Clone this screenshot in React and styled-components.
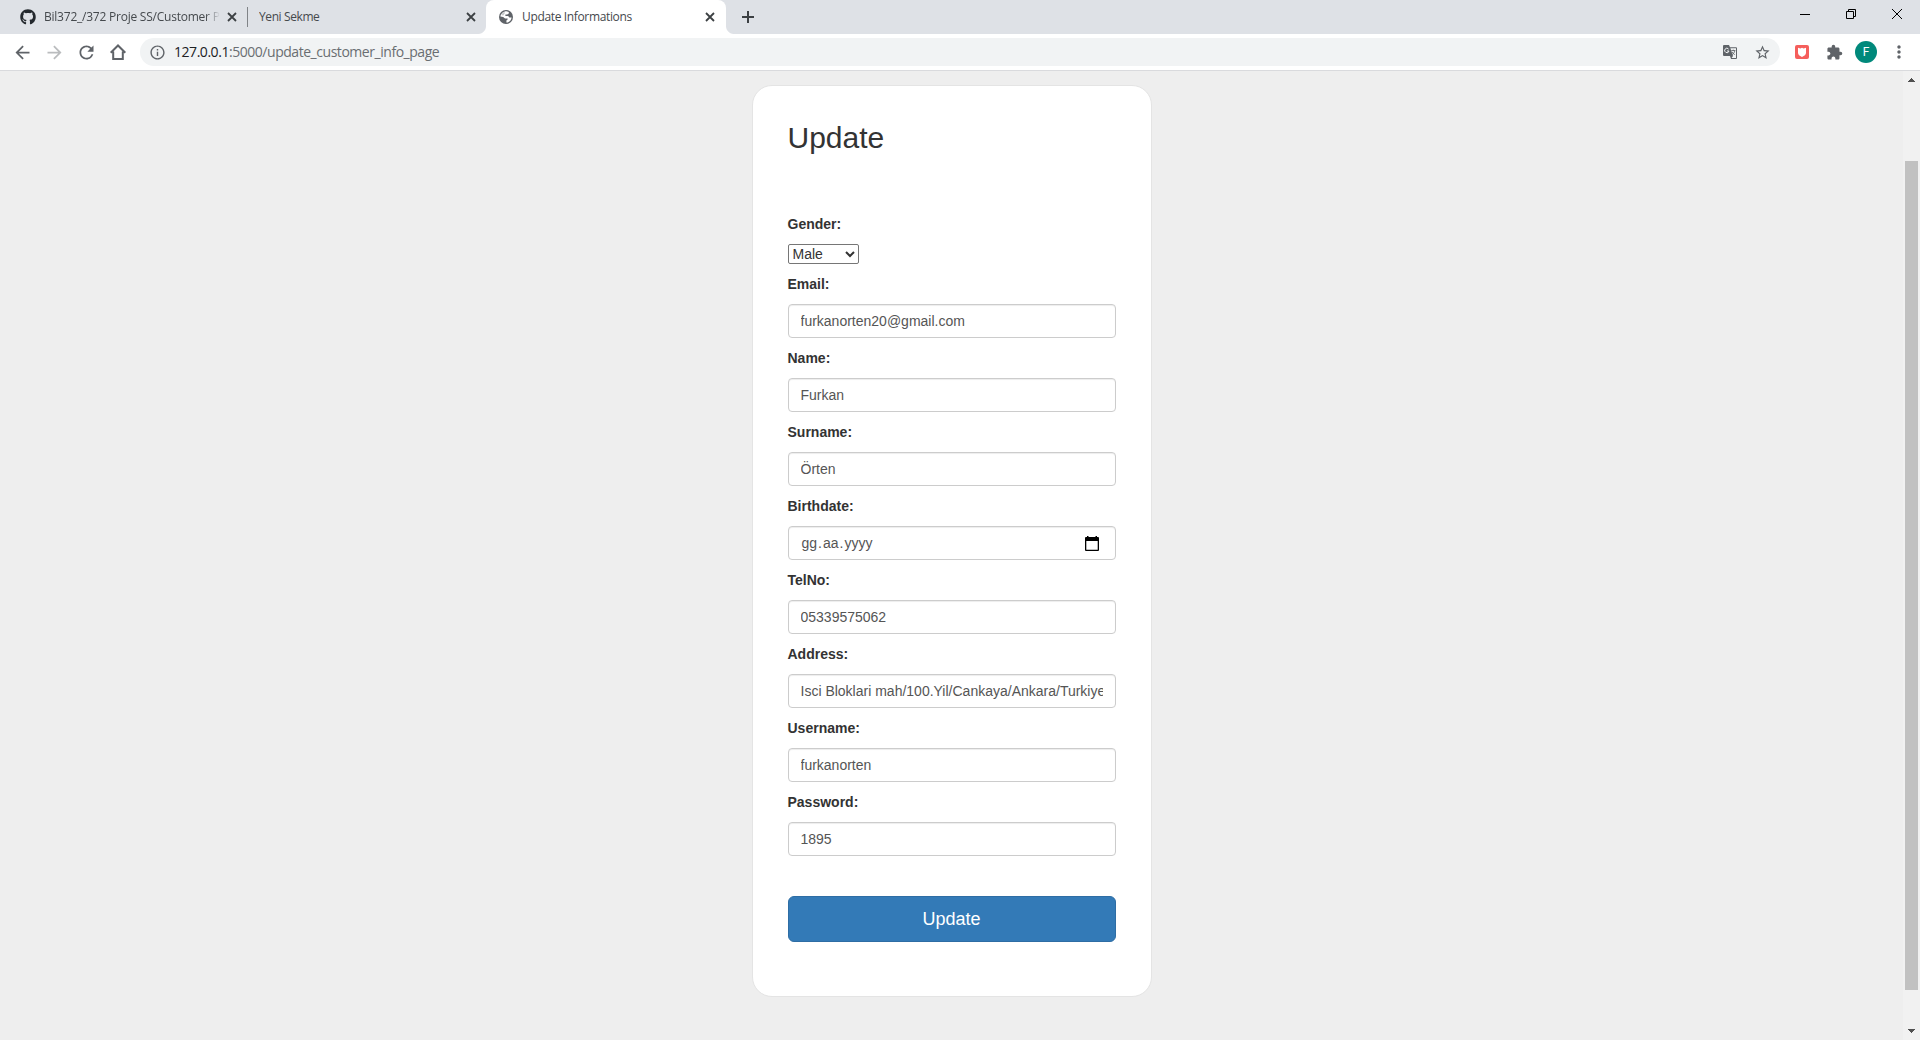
import React from "react";
import styled, { createGlobalStyle } from "styled-components";
import { FaGithub } from "react-icons/fa";
import {
  MdArrowBack,
  MdArrowForward,
  MdRefresh,
  MdStarBorder,
  MdExtension,
  MdMoreVert,
  MdInfoOutline,
} from "react-icons/md";

const GlobalStyle = createGlobalStyle`
  * { box-sizing: border-box; }
  body { margin: 0; background: #eee; overflow: hidden; }
  svg { display: block; flex: none; }
`;

const ui = `"Open Sans", "Noto Sans", sans-serif`;
const arial = `"Liberation Sans", Arial, sans-serif`;

const Window = styled.div`
  display: flex;
  flex-direction: column;
  width: 1920px;
  height: 1040px;
  background: #eee;
`;

const TabStrip = styled.div`
  display: flex;
  height: 34px;
  background: #dee1e6;
`;

const Tab = styled.div`
  position: relative;
  display: flex;
  align-items: center;
  width: ${(p) => p.$width}px;
  height: 34px;
  padding: 0 ${(p) => (p.$active ? 10 : 9)}px 0 ${(p) => p.$start}px;
  background: ${(p) => (p.$active ? "#fff" : "transparent")};
  border-radius: 8px 8px 0 0;
  color: #45494d;
  font: 12px/16px ${ui};
  &::before,
  &::after {
    content: "";
    display: ${(p) => (p.$active ? "block" : "none")};
    position: absolute;
    bottom: 0;
    width: 8px;
    height: 8px;
  }
  &::before {
    left: -8px;
    background: radial-gradient(circle at 0 0, transparent 7.5px, #fff 8.5px);
  }
  &::after {
    right: -8px;
    background: radial-gradient(circle at 100% 0, transparent 7.5px, #fff 8.5px);
  }
`;

const TabTitle = styled.span`
  flex: 1;
  margin-left: ${(p) => p.$gap || 0}px;
  overflow: hidden;
  white-space: nowrap;
  letter-spacing: ${(p) => p.$spacing || 0}px;
  mask-image: ${(p) =>
    p.$fade ? "linear-gradient(to right, #000 calc(100% - 14px), transparent)" : "none"};
`;

const TabClose = styled.button`
  display: flex;
  align-items: center;
  justify-content: center;
  width: 12px;
  height: 12px;
  margin-left: 6px;
  padding: 0;
  border: 0;
  background: none;
`;

const Separator = styled.div`
  width: 1px;
  height: 20px;
  margin-top: 7px;
  background: #808387;
`;

const NewTab = styled.button`
  display: flex;
  align-items: center;
  justify-content: center;
  width: 28px;
  height: 34px;
  margin-left: 8px;
  padding: 0;
  border: 0;
  background: none;
`;

const WindowControls = styled.div`
  display: flex;
  gap: 36px;
  margin: 9px 18px 0 auto;
`;

const Toolbar = styled.div`
  display: flex;
  align-items: center;
  height: 37px;
  padding-left: 6px;
  background: #fff;
  border-bottom: 1px solid #d9dadd;
  color: #5f6368;
`;

const NavButtons = styled.div`
  display: grid;
  grid-template-columns: repeat(4, 32px);
  align-items: center;
  justify-items: center;
  margin-right: 6px;
`;

const Omnibox = styled.div`
  display: flex;
  align-items: center;
  width: 1640px;
  height: 28px;
  padding: 0 9px;
  border-radius: 14px;
  background: #f1f3f4;
`;

const Url = styled.span`
  flex: 1;
  margin-left: 8px;
  color: #6a6e72;
  font: 14px/20px ${ui};
  letter-spacing: ${(p) => p.$spacing}px;
  b {
    color: #202124;
    font-weight: 400;
  }
`;

const OmniActions = styled.div`
  display: flex;
  align-items: center;
  gap: 17px;
`;

const Extensions = styled.div`
  display: flex;
  align-items: center;
  gap: 12px;
  margin-left: 15px;
`;

const PinnedExtension = styled.div`
  margin-right: 5px;
`;

const Avatar = styled.div`
  width: 22px;
  height: 22px;
  border-radius: 50%;
  background: #00897b;
  color: #fff;
  font: 12px/22px Roboto, sans-serif;
  text-align: center;
`;

const Viewport = styled.div`
  display: flex;
  flex: 1;
  min-height: 0;
`;

const Page = styled.main`
  display: flex;
  flex: 1;
  align-items: flex-start;
  justify-content: center;
  padding-top: 14px;
  background: #eee;
`;

const Card = styled.form`
  display: flex;
  flex-direction: column;
  width: 400px;
  height: 912px;
  padding: 35px;
  border: 1px solid #e4e4e4;
  border-radius: 20px;
  background: #fff;
  color: #333;
  font: 14px/20px ${arial};
`;

const Heading = styled.h2`
  margin: 0 0 60px;
  font-size: 30px;
  font-weight: 500;
  line-height: 33px;
`;

const Field = styled.div`
  display: flex;
  flex-direction: column;
  align-items: flex-start;
  gap: 10px;
  margin-bottom: 10px;
`;

const Label = styled.label`
  font-weight: 700;
`;

const Select = styled.select`
  width: 71px;
  height: 20px;
  margin: 0;
  padding: 0;
  border: 1px solid #767676;
  border-radius: 2px;
  background: #fff;
  color: #333;
  font: 14px/18px ${arial};
`;

const Input = styled.input`
  width: 100%;
  height: 34px;
  padding: 6px 12px;
  border: 1px solid #ccc;
  border-radius: 4px;
  background: #fff;
  box-shadow: inset 0 1px 1px rgba(0, 0, 0, 0.075);
  color: #555;
  font: 14px/20px ${arial};
`;

const DateInput = styled.div`
  display: flex;
  align-items: center;
  justify-content: space-between;
  width: 100%;
  height: 34px;
  padding: 0 16px 0 13px;
  border: 1px solid #ccc;
  border-radius: 4px;
  box-shadow: inset 0 1px 1px rgba(0, 0, 0, 0.075);
  color: #555;
`;

const DateText = styled.span`
  display: flex;
  gap: 1px;
`;

const Submit = styled.button`
  height: 46px;
  margin: 30px 0 0;
  border: 1px solid #2e6da4;
  border-radius: 6px;
  background: #337ab7;
  color: #fff;
  font: 18px/24px ${arial};
`;

const Scrollbar = styled.div`
  display: flex;
  flex-direction: column;
  align-items: center;
  width: 17px;
  padding: 7px 0;
  background: #f1f1f1;
`;

const Thumb = styled.div`
  width: 13px;
  height: 829px;
  margin: 79px 0 39px;
  background: #c1c1c1;
`;

const Cross = () => (
  <svg width="10" height="10" viewBox="0 0 10 10" stroke="#3c4043" strokeWidth="1.8">
    <path d="M1 1l8 8M9 1l-8 8" />
  </svg>
);

const Globe = () => (
  <svg width="14" height="14" viewBox="0 0 14 14">
    <circle cx="7" cy="7" r="7" fill="#5f6368" />
    <path
      d="M7.6 1.2L9.8 1.9V3.4L8.2 4.5H6.4V6H9.2L10.3 7.4H12.6C12.4 9.6 11 11.6 8.8 12.4L7.4 12.6V10.6L8.6 9.6V8.6H6L4.2 7L1.4 6.4C1.7 3.8 4.2 1.2 7.6 1.2z"
      fill="#fff"
    />
    <path d="M3 3.6L4.8 2.2L6.2 2.6L5 4.4L4.2 5.6L2.4 5z" fill="#5f6368" opacity=".35" />
  </svg>
);

const Home = () => (
  <svg width="16" height="16" viewBox="0 0 16 16" fill="none" stroke="#5f6368" strokeWidth="2">
    <path d="M.7 8.8L8 1.5l7.3 7.3M3.2 7.5V15h9.6V7.5" />
  </svg>
);

const Translate = () => (
  <svg width="14" height="14" viewBox="0 0 14 14">
    <path d="M1 0h5l1 2.2h6a1 1 0 0 1 1 1V13a1 1 0 0 1-1 1H8l-1-3H1a1 1 0 0 1-1-1V1a1 1 0 0 1 1-1z" fill="#5f6368" />
    <path d="M7.4 3.2H13V13H8.6L10 11z" fill="#f1f3f4" />
    <path d="M5.6 4.1A2.2 2.2 0 1 0 6 6H4" fill="none" stroke="#f1f3f4" />
    <path d="M8.3 5.6h4M10.3 4.7v.9M11.8 5.6c-.3 1.7-1.2 3-2.6 4M9 7c.6 1 1.6 2 2.7 2.6" fill="none" stroke="#5f6368" strokeWidth=".9" />
  </svg>
);

const Shield = () => (
  <svg width="14" height="14" viewBox="0 0 14 14">
    <rect width="14" height="14" rx="2" fill="#f55f5c" />
    <path d="M3 2.8l2.4.6L7 2.8l1.6.6 2.4-.6v5c0 2-1.5 3.2-4 4.1-2.5-.9-4-2.1-4-4.1z" fill="#fff" />
  </svg>
);

const Calendar = () => (
  <svg width="14" height="15" viewBox="0 0 14 15">
    <path d="M2 0h1.5v1h7V0H12v1h1a1 1 0 0 1 1 1v12a1 1 0 0 1-1 1H1a1 1 0 0 1-1-1V2a1 1 0 0 1 1-1h1zM1.3 5v8.7h11.4V5z" fill="#000" fillRule="evenodd" />
  </svg>
);

const ScrollArrow = ({ down }) => (
  <svg width="7" height="4" viewBox="0 0 7 4" fill="#505050" shapeRendering="crispEdges">
    <path d={down ? "M0 0h7v1H6v1H5v1H4v1H3V3H2V2H1V1H0z" : "M0 4h7V3H6V2H5V1H4V0H3v1H2v1H1v1H0z"} />
  </svg>
);

const TextField = ({ label, value }) => (
  <Field>
    <Label>{label}</Label>
    <Input type="text" defaultValue={value} />
  </Field>
);

export default function App() {
  return (
    <Window>
      <GlobalStyle />
      <TabStrip>
        <Tab $width={247} $start={20}>
          <FaGithub size={16} color="#24292e" />
          <TabTitle $gap={8} $fade $spacing={-0.23}>
            Bil372_/372 Proje SS/Customer Pa
          </TabTitle>
          <TabClose><Cross /></TabClose>
        </Tab>
        <Separator />
        <Tab $width={238} $start={11}>
          <TabTitle $spacing={-0.4}>Yeni Sekme</TabTitle>
          <TabClose><Cross /></TabClose>
        </Tab>
        <Tab $width={240} $start={13} $active>
          <Globe />
          <TabTitle $gap={9} $spacing={-0.35}>Update Informations</TabTitle>
          <TabClose><Cross /></TabClose>
        </Tab>
        <NewTab>
          <svg width="12" height="12" viewBox="0 0 12 12" stroke="#3c4043" strokeWidth="2">
            <path d="M6 0v12M0 6h12" />
          </svg>
        </NewTab>
        <WindowControls>
          <svg width="10" height="10" viewBox="0 0 10 10"><path d="M0 5h10v1H0z" fill="#000" /></svg>
          <svg width="10" height="10" viewBox="0 0 10 10" fill="none" stroke="#000">
            <path d="M.5 2.5h7v7h-7zM2.5 2.5v-2h7v7h-2" />
          </svg>
          <svg width="10" height="10" viewBox="0 0 10 10" stroke="#000"><path d="M0 0l10 10M10 0L0 10" /></svg>
        </WindowControls>
      </TabStrip>
      <Toolbar>
        <NavButtons>
          <MdArrowBack size={21} />
          <MdArrowForward size={21} color="#babcbe" />
          <MdRefresh size={21} />
          <Home />
        </NavButtons>
        <Omnibox>
          <MdInfoOutline size={17} />
          <Url $spacing={-0.46}><b>127.0.0.1</b>:5000/update_customer_info_page</Url>
          <OmniActions>
            <Translate />
            <MdStarBorder size={17} />
          </OmniActions>
        </Omnibox>
        <Extensions>
          <PinnedExtension><Shield /></PinnedExtension>
          <MdExtension size={17} />
          <Avatar>F</Avatar>
          <MdMoreVert size={20} />
        </Extensions>
      </Toolbar>
      <Viewport>
        <Page>
          <Card>
            <Heading>Update</Heading>
            <Field>
              <Label>Gender:</Label>
              <Select defaultValue="Male">
                <option>Male</option>
              </Select>
            </Field>
            <TextField label="Email:" value="furkanorten20@gmail.com" />
            <TextField label="Name:" value="Furkan" />
            <TextField label="Surname:" value="Örten" />
            <Field>
              <Label>Birthdate:</Label>
              <DateInput>
                <DateText>
                  <span>gg</span><span>.</span><span>aa</span><span>.</span><span>yyyy</span>
                </DateText>
                <Calendar />
              </DateInput>
            </Field>
            <TextField label="TelNo:" value="05339575062" />
            <TextField label="Address:" value="Isci Bloklari mah/100.Yil/Cankaya/Ankara/Turkiye" />
            <TextField label="Username:" value="furkanorten" />
            <TextField label="Password:" value="1895" />
            <Submit type="button">Update</Submit>
          </Card>
        </Page>
        <Scrollbar>
          <ScrollArrow />
          <Thumb />
          <ScrollArrow down />
        </Scrollbar>
      </Viewport>
    </Window>
  );
}
